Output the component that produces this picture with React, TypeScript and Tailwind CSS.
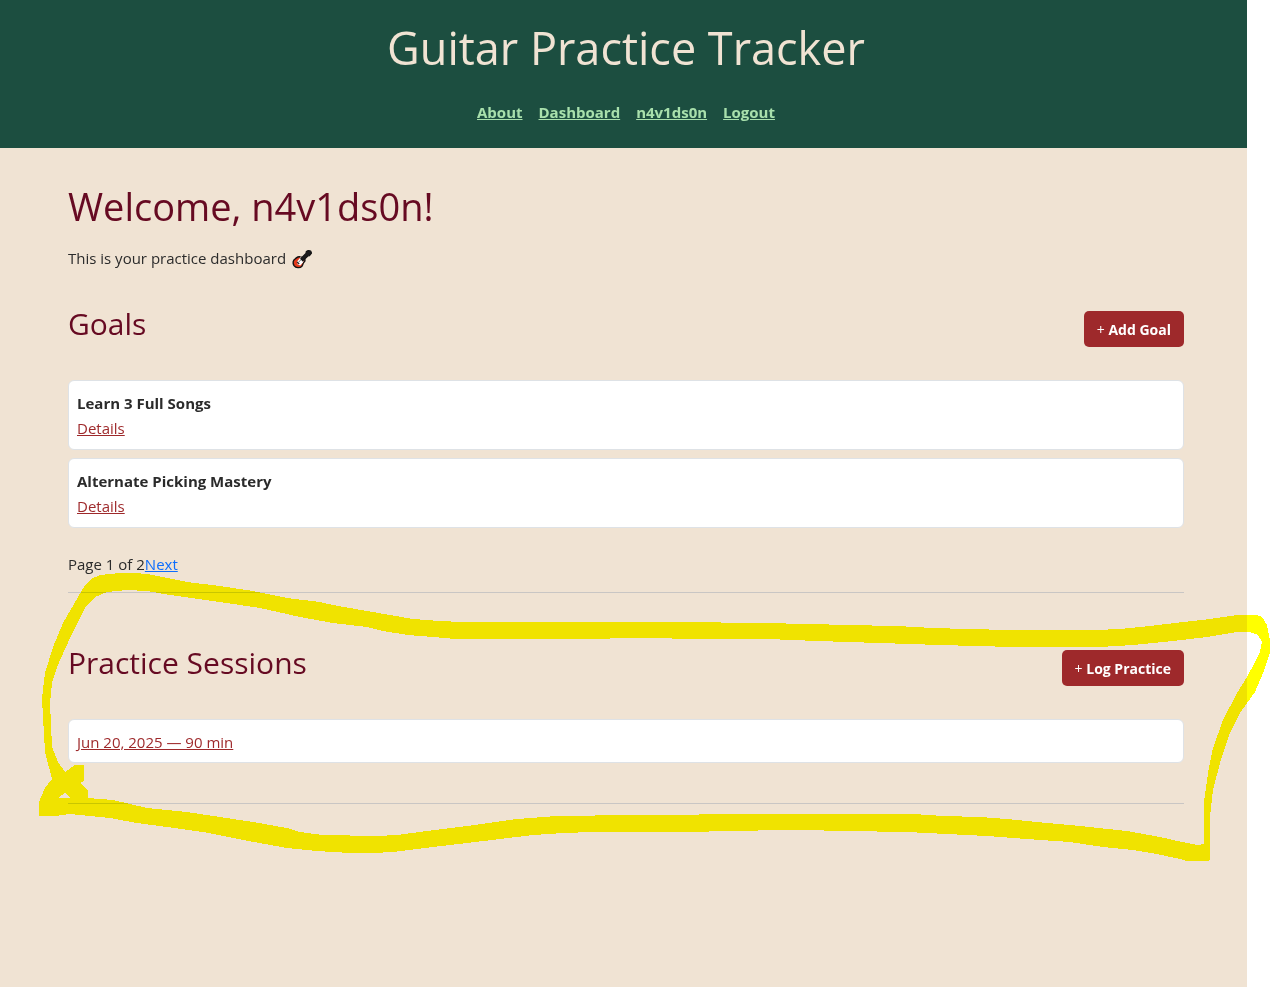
import React from "react";

const navLinks = ["About", "Dashboard", "n4v1ds0n", "Logout"];
const goals = ["Learn 3 Full Songs", "Alternate Picking Mastery"];
const sessions = ["Jun 20, 2025 — 90 min"];

function GuitarIcon() {
  return (
    <svg role="img" aria-label="guitar" viewBox="0 0 20 20" className="ml-0.5 inline-block h-5 w-5 align-middle">
      <path d="M7.800 6.800C5.500 6.300 4.800 7.900 3.200 8.800.9 10 .5 13.200 2 15.600c1.900 2.500 6 2.700 7.900.6 1.300-1.500.8-2.700 2-3.900 1.400-1.300 1.400-3 .1-4.200-1.200-1.100-2.700-.8-4.200-1.300z" fill="#e63a1c" stroke="#111" strokeWidth="1.400" />
      <path d="M8.600 7.300 5.300 11.300l.4 3.200 2.600.9 2.600-3 1.200-2.600-1.500-2z" fill="#fff" />
      <path d="m6.500 12.300 5-5.300" stroke="#77777b" strokeWidth="1" />
      <path d="m5 11.800 2.200 2.200" stroke="#222" strokeWidth="1.200" />
      <path d="M8.800 8.600 14 3.400 14.300 1.600 16.300.5l2.400.5.8 2.200-2 2.400-1.700.4-5 4.800z" fill="#1b1b1d" stroke="#151515" strokeWidth="1.200" strokeLinejoin="round" />
    </svg>
  );
}

function SectionHeader({ title, action }: { title: string; action: string }) {
  return (
    <div className="flex justify-between">
      <h2 className="text-[30px] leading-[42px] text-[#660a22]">{title}</h2>
      <button type="button" className="mt-2 h-9 rounded-[5px] bg-[#9e292b] px-[13px] text-[14px] font-bold text-white">
        <span className="font-normal">+</span> {action}
      </button>
    </div>
  );
}

function Marker() {
  return (
    <svg
      aria-hidden="true"
      viewBox="0 0 1270 987"
      className="pointer-events-none absolute left-0 top-0 h-[987px] w-[1270px] mix-blend-multiply"
      shapeRendering="crispEdges"
    >
      <path
        fill="#ffff00"
        fillRule="evenodd"
        d="M42 698 45 673 53 647 63 623 78 597 84 587 91 579 100 575 120 573 134 573 147 574 187 582 220 586 253 591 287 598 320 602 333 605 367 611 390 615 413 619 440 621 462 622 680 622 762 623 810 624 847 625 897 626 933 628 967 629 1010 630 1095 630 1120 629 1150 626 1183 622 1210 619 1237 615 1257 615 1262 617 1267 625 1270 640 1270 653 1263 673 1255 692 1247 703 1240 713 1230 733 1220 763 1213 790 1210 817 1210 859 1208 861 1187 861 1180 859 1157 854 1133 850 1103 847 1070 842 1027 839 987 836 947 834 907 832 847 831 800 830 717 831 700 832 593 832 563 833 533 835 500 839 467 843 433 847 393 852 372 853 350 853 317 851 287 848 243 840 203 832 167 827 137 823 110 818 70 814 55 816 39 816 39 802 41 797 45 788 52 779 45 752 43 717Z
        M50 703 52 683 57 667 70 638 85 608 95 597 107 592 127 590 147 591 170 595 213 601 260 608 287 614 300 617 333 623 367 627 383 631 408 635 433 637 455 639 577 639 643 638 700 639 768 639 817 641 880 643 940 645 1013 647 1100 647 1133 645 1173 641 1207 637 1237 632 1250 632 1258 635 1262 642 1260 652 1255 662 1247 677 1237 693 1223 720 1213 748 1208 773 1204 802 1204 844 1198 845 1182 842 1160 837 1127 831 1080 826 1047 823 1007 819 980 817 943 816 913 814 717 814 680 815 633 815 557 816 517 819 467 826 427 831 397 835 377 836 323 835 300 832 287 828 253 822 220 817 187 812 147 808 113 800 88 798 88 791 80 783 84 781 84 765 75 765 65 772 58 762 52 747Z
        M65 793 71 798 58 798Z"
      />
    </svg>
  );
}

export default function App() {
  return (
    <div className="relative isolate min-h-screen bg-white pr-[23px] font-['Open_Sans','Noto_Sans',sans-serif] text-[15px] text-[#2b2b2b]">
      <div className="min-h-screen bg-[#f0e3d3]">
        <header className="bg-[#1c4e40] pb-6 pl-[5px] pt-[18px] text-center">
          <h1 className="text-[45px] font-normal leading-[60px] text-[#f0e3d3]">Guitar Practice Tracker</h1>
          <nav className="mt-[22px] flex justify-center gap-4 font-bold leading-6 text-[#a8e0ac]">
            {navLinks.map((label) => (
              <a key={label} href="#" className="underline">{label}</a>
            ))}
          </nav>
        </header>

        <main className="pb-12 pl-[68px] pr-[63px] pt-[34px]">
          <h1 className="text-[38px] leading-[48px] text-[#660a22]">Welcome, n4v1ds0n!</h1>
          <p className="mt-4 leading-6">
            This is your practice dashboard <GuitarIcon />
          </p>

          <section className="mt-[33px]">
            <SectionHeader title="Goals" action="Add Goal" />
            <ul className="mt-[33px] flex flex-col gap-2">
              {goals.map((goal) => (
                <li key={goal} className="rounded-md border border-[#dee2e6] bg-white px-2 pb-2 pt-2.5 leading-[25px]">
                  <strong className="block">{goal}</strong>
                  <a href="#" className="text-[#9e292b] underline">Details</a>
                </li>
              ))}
            </ul>
            <p className="mt-6 leading-6">
              Page 1 of 2<a href="#" className="text-[#0d6efd] underline">Next</a>
            </p>
          </section>

          <hr className="mt-4 border-[#c9c6c4]" />

          <section className="mt-[49px]">
            <SectionHeader title="Practice Sessions" action="Log Practice" />
            <ul className="mt-[33px] flex flex-col gap-2">
              {sessions.map((session) => (
                <li key={session} className="rounded-md border border-[#dee2e6] bg-white px-2 pb-[7px] pt-[9px] leading-[26px]">
                  <a href="#" className="text-[#9e292b] underline">{session}</a>
                </li>
              ))}
            </ul>
          </section>

          <hr className="mt-10 border-[#c9c6c4]" />
        </main>
      </div>
      <Marker />
    </div>
  );
}
